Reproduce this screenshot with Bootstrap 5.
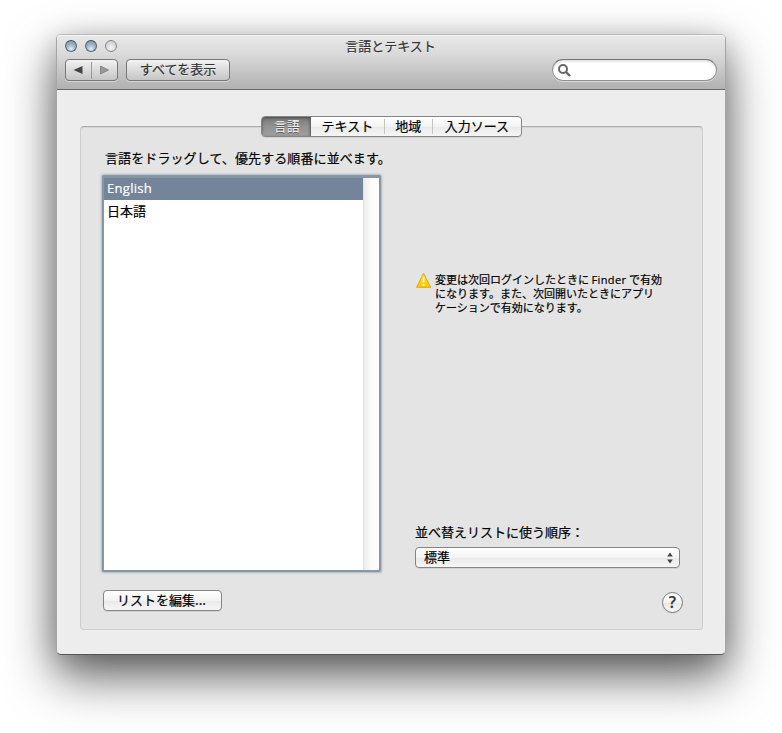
<!DOCTYPE html>
<html lang="ja">
<head>
<meta charset="utf-8">
<title>言語とテキスト</title>
<link href="https://cdn.jsdelivr.net/npm/bootstrap@5.3.0/dist/css/bootstrap.min.css" rel="stylesheet">
<style>
html{height:100%;overflow:hidden;background:#fff}
body{background:#fff;min-height:733px;padding:34px 0 0 56px;font:13px/20px "Noto Sans CJK JP",sans-serif;color:#000;-webkit-text-stroke:.2px}
.window{width:670px;height:621px;border:1px solid #77777799;border-top-color:#bbb;border-bottom-color:#555;border-radius:5px;background:#ededed;box-shadow:0 22px 50px rgba(0,0,0,.6),0 6px 28px rgba(0,0,0,.2)}
.titlebar{height:55px;background:linear-gradient(#e9e9e9,#dadada 35%,#b1b1b1);border-bottom:1px solid #696969;border-radius:4px 4px 0 0;box-shadow:inset 0 1px #f4f4f4}
.title-row{height:24px;padding:0 9px 2px 8px}
.title-row .name{color:#333;text-shadow:0 1px #ffffff80;margin-top:-1px}
.lights{width:96px}
.light{width:12px;height:12px;border-radius:50%;border:1px solid #566775;border-top-color:#3f4b56;background:radial-gradient(circle at 50% 80%,#dcebf4 5%,#a2b6c6 45%,#7f95a6 90%)}
.light.off{border-color:#858585;background:radial-gradient(circle at 50% 70%,#f4f4f4,#c6c6c6)}
.tools{padding:0 8px}
.mac{height:22px;border:1px solid #858585;border-radius:4px;background:linear-gradient(#fff,#f3f3f3 50%,#e9e9e9 51%,#f6f6f6);box-shadow:0 1px #00000012;padding:0;font-size:13px;line-height:18px;color:#000}
.mac.tool{border-color:#777;background:linear-gradient(#f2f2f2,#c5c5c5);color:#333;box-shadow:0 1px #ffffff66;text-shadow:0 1px #ffffff70}
.navs{width:53px;padding:0 2px!important}.navs span{width:1px;height:17px;background:#999}
.mac.all{width:104px;line-height:18px;padding-bottom:2px}
.find{width:165px;height:22px;border:1px solid #929292;border-top-color:#747474;border-radius:11px;background:#fff;box-shadow:inset 0 2px 2px #0000001c,0 1px #ffffff70;padding-left:4px}
.content-area{padding:36px 22px 0 23px}
.group{height:504px;border:1px solid #cdcdcd;border-top-color:#adadad;border-radius:4px;background:#e4e4e4;box-shadow:inset 0 1px #d5d5d5}
.tabs{width:261px;height:21px;margin:-11px auto 0;overflow:hidden}
.tabs>div{height:19px;line-height:17px;text-align:center}
.tabs .on{width:49px;background:linear-gradient(#777,#929292 50%,#a0a0a0);color:#f5f5f5;text-shadow:0 1px #555;border-right:1px solid #666;box-shadow:inset 0 1px 3px #0006;padding-left:2px;-webkit-text-stroke:0}
.t2{width:74px}.t3{width:47px}.t4{width:89px}
.tabs .rule{width:1px;height:15px;background:#c4c4c4;flex:none}
.left{margin-left:21px;width:279px}
.prompt{margin:11px 0 7px 3px;white-space:nowrap;letter-spacing:.1px}
.list{height:397px;border:2px solid #8796a3;border-top-width:3px;box-shadow:0 0 2px 1px #8b9bab99;background:#fff;border-radius:2px}
.names{width:259px}
.names div{height:23px;line-height:21px;padding-left:3px}
.names .sel{height:22px;background:#74849b;color:#fff;font:13px/21px "Open Sans",sans-serif;letter-spacing:.3px}
.track{width:16px;background:linear-gradient(90deg,#ececec,#fbfbfb 50%,#fff);border-left:1px solid #e3e3e3}
.mac.edit{width:119px;margin:18px 0 0 1px;height:21px;padding:0 2px 1px 0}
.right{margin-left:34px;width:268px}
.warn{margin-top:135px;font-size:11px;line-height:14px;white-space:nowrap}
.warn .en{font-family:"Open Sans",sans-serif;letter-spacing:.4px;line-height:1}
.warn svg{margin-left:1px;margin-right:3px}
.order{margin-top:208px}
.pick{width:265px;height:21px;margin-top:5px;padding:0 5px 0 8px}
.pick span{padding-bottom:2px}
.mac.help{width:21px;height:21px;border-radius:50%;margin-top:24px;border-color:#7c7c7c;font:600 16px/19px "Open Sans",sans-serif;color:#333}
</style>
<script src="https://cdn.jsdelivr.net/npm/bootstrap@5.3.0/dist/js/bootstrap.bundle.min.js"></script>
</head>
<body>
<main class="window">
<header class="titlebar">
<div class="title-row d-flex align-items-center justify-content-between">
<div class="lights d-flex gap-2"><i class="light"></i><i class="light"></i><i class="light off"></i></div>
<div class="name">言語とテキスト</div><div class="lights"></div>
</div>
<div class="tools d-flex">
<div class="mac tool navs d-flex align-items-center justify-content-around">
<svg width="12" height="10"><path d="M1.5 5L10.5 1V9Z" fill="#444"/></svg><span></span><svg width="12" height="10"><path d="M9.5 5L1.5 1V9Z" fill="#999" stroke="#777" stroke-width=".7"/></svg>
</div>
<button class="mac tool all ms-2">すべてを表示</button>
<div class="find ms-auto d-flex align-items-center"><svg width="15" height="15" fill="none" stroke="#666"><circle cx="6" cy="6" r="4" stroke-width="2"/><path d="M9 9L13 13" stroke-width="2.4"/></svg></div>
</div>
</header>
<section class="content-area">
<div class="group">
<div class="mac tabs d-flex align-items-center"><div class="on">言語</div><div class="t2">テキスト</div><div class="rule"></div><div class="t3">地域</div><div class="rule"></div><div class="t4">入力ソース</div></div>
<div class="d-flex">
<div class="left">
<div class="prompt">言語をドラッグして、優先する順番に並べます。</div>
<div class="list d-flex"><div class="names"><div class="sel">English</div><div>日本語</div></div><div class="track"></div></div>
<button class="mac edit">リストを編集...</button>
</div>
<div class="right d-flex flex-column">
<div class="warn d-flex"><svg class="flex-shrink-0" width="16" height="17"><defs><linearGradient id="y" x2="0" y2="1"><stop stop-color="#ffe033"/><stop offset="1" stop-color="#f7c800"/></linearGradient></defs><path d="M7.5 1.2L14.7 15.3H.6Z" fill="url(#y)" stroke="#d9aa18" stroke-linejoin="round"/><path d="M7.6 5.5V10.6M7.6 12V13.7" stroke="#fff" stroke-width="1.6"/></svg><div>変更は次回ログインしたときに <span class="en">Finder</span> で有効<br>になります。また、次回開いたときにアプリ<br>ケーションで有効になります。</div></div>
<div class="order">並べ替えリストに使う順序：</div>
<div class="mac pick d-flex align-items-center justify-content-between"><span>標準</span><svg width="8" height="12" fill="#444"><path d="M4 .5L6.8 4.5H1.2ZM4 11.5L6.8 7.5H1.2Z"/></svg></div>
<button class="mac help align-self-end">?</button>
</div>
</div>
</div>
</section>
</main>
</body>
</html>
